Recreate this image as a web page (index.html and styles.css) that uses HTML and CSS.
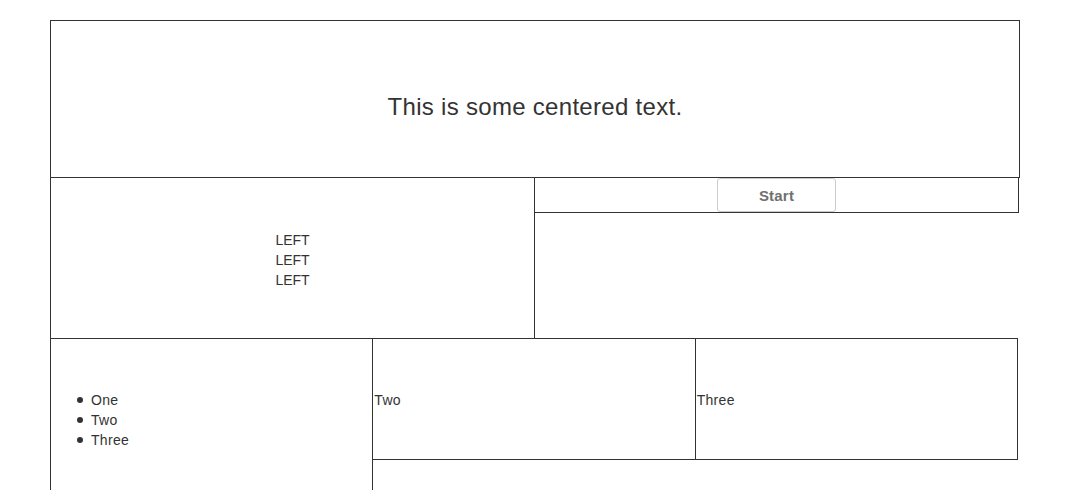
FILE: index.html
```html
<!DOCTYPE html>
<html>
<head>
<meta charset="utf-8">
<link rel="stylesheet" href="styles.css">
</head>
<body>
<div class="page">
  <div class="hero">This is some centered text.</div>
  <div class="row2">
    <div class="left">
      <div>LEFT</div>
      <div>LEFT</div>
      <div>LEFT</div>
    </div>
    <div class="right">
      <div class="right-head">
        <button class="btn">Start</button>
      </div>
    </div>
  </div>
  <div class="row3">
    <div class="cell cell-list">
      <ul class="list">
        <li>One</li>
        <li>Two</li>
        <li>Three</li>
      </ul>
    </div>
    <div class="cell cell-short">Two</div>
    <div class="cell cell-short">Three</div>
  </div>
</div>
</body>
</html>
```

FILE: styles.css
```css
* {
  box-sizing: border-box;
}

body {
  margin: 0;
  font-family: "Liberation Sans", Arial, sans-serif;
  font-size: 14px;
  line-height: 20px;
  color: #333;
  background: #fff;
  letter-spacing: 0.3px;
}

.page {
  width: 970px;
  margin: 20px 0 0 50px;
}

.hero {
  height: 158px;
  border: 1px solid #333;
  display: flex;
  align-items: center;
  justify-content: center;
  padding-top: 15px;
  font-size: 24px;
  line-height: normal;
}

.row2 {
  display: flex;
  margin-top: -1px;
}

.left {
  width: 485px;
  height: 162px;
  border: 1px solid #333;
  display: flex;
  flex-direction: column;
  align-items: center;
  justify-content: center;
  padding-top: 3px;
  letter-spacing: 0;
}

.right {
  width: 485px;
  margin-left: -1px;
}

.right-head {
  height: 36px;
  border: 1px solid #333;
  display: flex;
  justify-content: center;
}

.btn {
  width: 119px;
  height: 34px;
  border: 1px solid #ccc;
  border-radius: 3px;
  background: #fff;
  font-family: "Liberation Sans", Arial, sans-serif;
  font-weight: bold;
  font-size: 15px;
  letter-spacing: 0.2px;
  color: #707070;
  padding: 0;
}

.row3 {
  display: flex;
  margin-top: -1px;
}

.cell {
  width: calc(970px / 3);
  border: 1px solid #333;
}

.cell + .cell {
  margin-left: -1px;
}

.cell-list {
  height: 164px;
  display: flex;
  align-items: center;
}

.cell-short {
  height: 122px;
  display: flex;
  align-items: center;
  padding-top: 2px;
  padding-left: 1px;
}

.list {
  margin: 16px 0;
  padding-left: 40px;
  list-style: none;
}

.list li::before {
  content: "";
  display: inline-block;
  width: 6px;
  height: 6px;
  border-radius: 50%;
  background: #333;
  margin-left: -14px;
  margin-right: 8px;
  vertical-align: 2px;
}
```
